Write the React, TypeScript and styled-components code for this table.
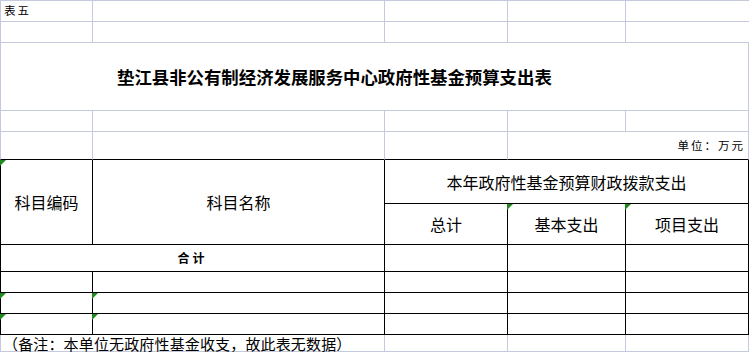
import React from "react";
import styled, { createGlobalStyle, css } from "styled-components";

const GlobalStyle = createGlobalStyle`
  html, body {
    margin: 0;
    padding: 0;
    background: #ffffff;
  }
  body {
    font-family: "Noto Sans CJK SC", "Noto Sans", sans-serif;
    color: #000000;
  }
`;

const COLORS = {
  grid: "#c4cadb",
  ink: "#000000",
  none: "transparent",
} as const;

type Line = keyof typeof COLORS;

const Sheet = styled.div`
  display: grid;
  grid-template-columns: 93px 292px 123px 118px 123px;
  grid-template-rows: 22px 21px 68px 21px 28px 44px 41px 27px 21px 21px 21px 17px;
  width: 749px;
  background: #ffffff;
`;

type CellProps = {
  $span?: number;
  $rows?: number;
  $t?: Line;
  $r?: Line;
  $b?: Line;
  $l?: Line;
  $align?: "flex-start" | "center" | "flex-end";
  $kind?: "body" | "title" | "caption" | "head" | "total" | "note";
  $padL?: number;
  $padR?: number;
};

const kinds = {
  body: css`
    font-size: 16px;
  `,
  title: css`
    font-size: 17.4px;
    font-weight: 700;
  `,
  caption: css`
    font-size: 11.5px;
    letter-spacing: 2px;
  `,
  head: css`
    font-size: 16px;
  `,
  total: css`
    font-size: 12px;
    font-weight: 700;
    letter-spacing: 3px;
  `,
  note: css`
    font-size: 15px;
    letter-spacing: 0.15px;
  `,
};

const Cell = styled.div<CellProps>`
  position: relative;
  box-sizing: border-box;
  display: flex;
  align-items: center;
  justify-content: ${(p) => p.$align ?? "center"};
  grid-column: span ${(p) => p.$span ?? 1};
  grid-row: span ${(p) => p.$rows ?? 1};
  border-style: solid;
  border-width: ${(p) => (p.$t ? 1 : 0)}px ${(p) => (p.$r === "none" ? 0 : 1)}px 1px
    ${(p) => (p.$l ? 1 : 0)}px;
  border-top-color: ${(p) => COLORS[p.$t ?? "grid"]};
  border-right-color: ${(p) => COLORS[p.$r ?? "grid"]};
  border-bottom-color: ${(p) => COLORS[p.$b ?? "grid"]};
  border-left-color: ${(p) => COLORS[p.$l ?? "grid"]};
  padding: 0 ${(p) => p.$padR ?? 0}px 0 ${(p) => p.$padL ?? 0}px;
  line-height: 1;
  white-space: nowrap;
  overflow: visible;
  ${(p) => kinds[p.$kind ?? "body"]}
`;

const Flag = styled.span`
  position: absolute;
  top: 0;
  left: -1px;
  width: 0;
  height: 0;
  border-top: 6px solid #1e8a1e;
  border-right: 6px solid transparent;
`;

const NoteText = styled.span`
  line-height: 15px;
`;

export default function App() {
  return (
    <>
      <GlobalStyle />
      <Sheet>
        {/* row 1 */}
        <Cell $t="grid" $l="grid" $align="flex-start" $padL={3} $kind="caption">
          表五
        </Cell>
        <Cell $t="grid" />
        <Cell $t="grid" />
        <Cell $t="grid" />
        <Cell $t="grid" $r="none" />

        {/* row 2 */}
        <Cell $l="grid" />
        <Cell />
        <Cell />
        <Cell />
        <Cell $r="none" />

        {/* title */}
        <Cell $span={5} $l="grid" $align="flex-start" $padL={116} $kind="title">
          垫江县非公有制经济发展服务中心政府性基金预算支出表
        </Cell>

        {/* row 4 */}
        <Cell $l="grid" />
        <Cell />
        <Cell />
        <Cell />
        <Cell />

        {/* unit row */}
        <Cell $l="grid" $b="ink" />
        <Cell $b="ink" />
        <Cell $b="ink" />
        <Cell $span={2} $b="ink" $align="flex-end" $padR={3} $kind="caption">
          单位：万元
        </Cell>

        {/* header */}
        <Cell $rows={2} $l="ink" $r="ink" $b="ink" $kind="head">
          <Flag />
          科目编码
        </Cell>
        <Cell $rows={2} $r="ink" $b="ink" $kind="head">
          科目名称
        </Cell>
        <Cell $span={3} $r="ink" $b="ink" $kind="head">
          本年政府性基金预算财政拨款支出
        </Cell>
        <Cell $r="ink" $b="ink" $kind="head">
          总计
        </Cell>
        <Cell $r="ink" $b="ink" $kind="head">
          <Flag />
          基本支出
        </Cell>
        <Cell $r="ink" $b="ink" $kind="head">
          <Flag />
          项目支出
        </Cell>

        {/* total */}
        <Cell $span={2} $l="ink" $r="ink" $b="ink" $kind="total">
          合计
        </Cell>
        <Cell $r="ink" $b="ink" />
        <Cell $r="ink" $b="ink" />
        <Cell $r="ink" $b="ink" />

        {/* data rows */}
        <Cell $l="ink" $r="ink" $b="ink" />
        <Cell $r="ink" $b="ink" />
        <Cell $r="ink" $b="ink" />
        <Cell $r="ink" $b="ink" />
        <Cell $r="ink" $b="ink" />

        <Cell $l="ink" $r="ink" $b="ink">
          <Flag />
        </Cell>
        <Cell $r="ink" $b="ink">
          <Flag />
        </Cell>
        <Cell $r="ink" $b="ink" />
        <Cell $r="ink" $b="ink" />
        <Cell $r="ink" $b="ink" />

        <Cell $l="ink" $r="ink" $b="ink">
          <Flag />
        </Cell>
        <Cell $r="ink" $b="ink">
          <Flag />
        </Cell>
        <Cell $r="ink" $b="ink" />
        <Cell $r="ink" $b="ink" />
        <Cell $r="ink" $b="ink" />

        {/* note */}
        <Cell $span={2} $l="grid" $align="flex-start" $padL={2} $kind="note">
          <NoteText>（备注：本单位无政府性基金收支，故此表无数据）</NoteText>
        </Cell>
        <Cell />
        <Cell />
        <Cell />
      </Sheet>
    </>
  );
}
